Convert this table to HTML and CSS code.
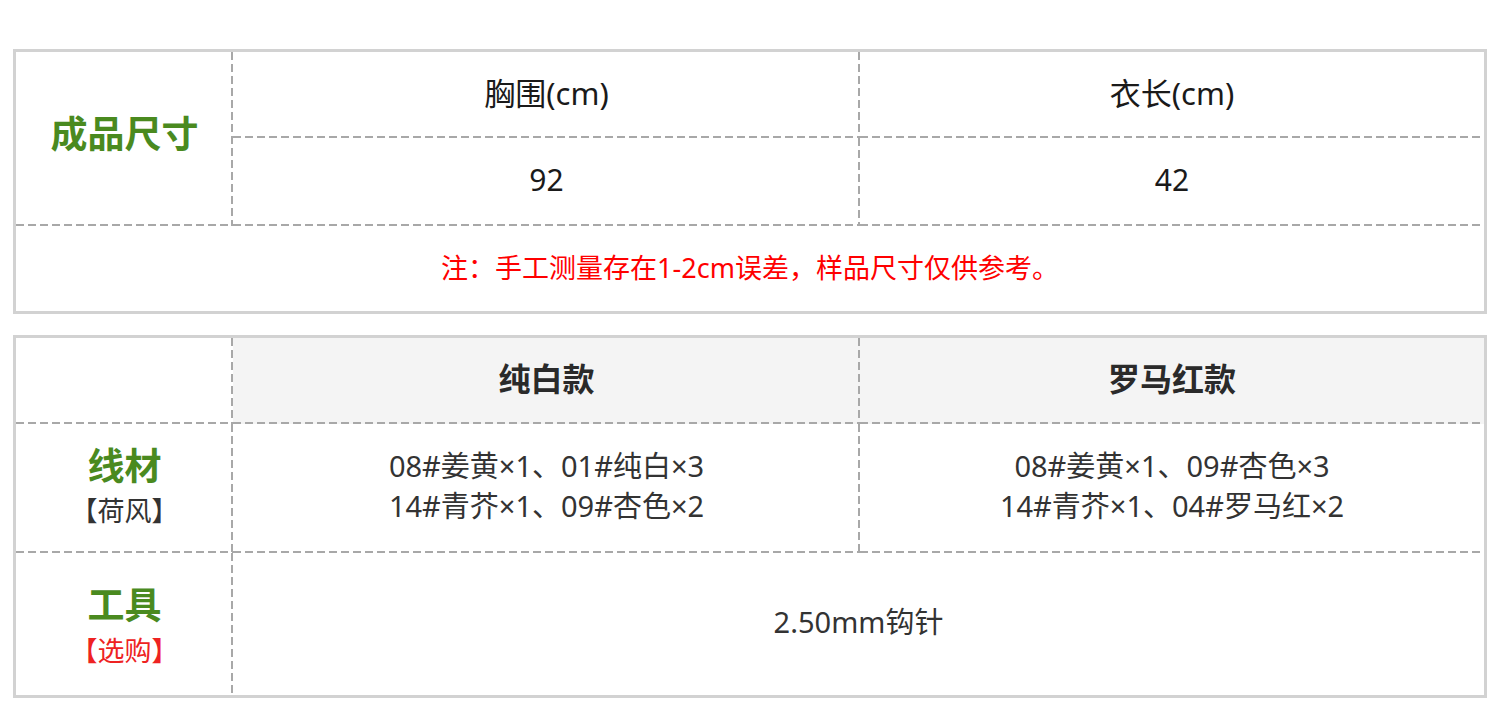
FILE: index.html
```html
<!DOCTYPE html>
<html lang="zh-CN">
<head>
<meta charset="utf-8">
<title>成品尺寸</title>
<link rel="stylesheet" href="styles.css">
</head>
<body>
<div class="page">
  <div class="table size-table">
    <div class="cell label-cell size-label rb span2"><span class="green">成品尺寸</span></div>
    <div class="cell head rb">胸围(cm)</div>
    <div class="cell head b">衣长(cm)</div>
    <div class="cell val rb">92</div>
    <div class="cell val b">42</div>
    <div class="cell note span3">注：手工测量存在1-2cm误差，样品尺寸仅供参考。</div>
  </div>

  <div class="table yarn-table">
    <div class="cell rb"></div>
    <div class="cell title rb grey">纯白款</div>
    <div class="cell title b grey">罗马红款</div>

    <div class="cell label-cell stack yarn rb">
      <span class="green">线材</span>
      <span class="sub">【荷风】</span>
    </div>
    <div class="cell body rb">
      <span>08#姜黄×1、01#纯白×3</span>
      <span>14#青芥×1、09#杏色×2</span>
    </div>
    <div class="cell body b">
      <span>08#姜黄×1、09#杏色×3</span>
      <span>14#青芥×1、04#罗马红×2</span>
    </div>

    <div class="cell label-cell stack tool r">
      <span class="green">工具</span>
      <span class="sub red">【选购】</span>
    </div>
    <div class="cell body single span2c">2.50mm钩针</div>
  </div>
</div>
</body>
</html>
```

FILE: styles.css
```css
* { box-sizing: border-box; }

html, body {
  margin: 0;
  padding: 0;
  background: #ffffff;
}

body {
  font-family: "Noto Sans", "Noto Sans CJK SC", sans-serif;
  color: #222;
}

.page {
  padding: 49px 0 0 13px;
  width: 1500px;
}

.table {
  width: 1474px;
  border: 3px solid #d2d2d2;
  display: grid;
  grid-template-columns: 217px 627px 624px;
}

.size-table {
  grid-template-rows: 86px 88px 85px;
}

.yarn-table {
  margin-top: 21px;
  grid-template-rows: 86px 129px 142px;
}

.cell {
  display: flex;
  align-items: center;
  justify-content: center;
  text-align: center;
  --dh: repeating-linear-gradient(to right, #a8a8a8 0 8px, transparent 8px 12px);
  --dv: repeating-linear-gradient(to bottom, #a8a8a8 0 8px, transparent 8px 12px);
}

.rb {
  background-image: var(--dv), var(--dh);
  background-position: right top, left bottom;
  background-size: 2px 100%, 100% 2px;
  background-repeat: no-repeat;
}

.b {
  background-image: var(--dh);
  background-position: left bottom;
  background-size: 100% 2px;
  background-repeat: no-repeat;
}

.r {
  background-image: var(--dv);
  background-position: right top;
  background-size: 2px 100%;
  background-repeat: no-repeat;
}

.grey { background-color: #f4f4f4; }

.span2 { grid-row: span 2; }
.span3 { grid-column: span 3; }
.span2c { grid-column: span 2; }

.green {
  color: #4a8a1f;
  font-weight: 700;
  font-size: 37px;
  line-height: 46px;
}

.size-label { padding-bottom: 10px; }

.stack {
  flex-direction: column;
}

.stack .green { line-height: 45px; }

.sub {
  font-size: 27px;
  line-height: 45px;
  color: #333;
}

.yarn { padding-bottom: 2px; }

.tool { padding-top: 7px; }
.tool .green { line-height: 46px; }
.tool .sub { line-height: 46px; }

.red { color: #ee2222; }

.head {
  font-size: 31px;
  color: #1a1a1a;
  padding-bottom: 8px;
}

.val {
  font-size: 30px;
  color: #1a1a1a;
  padding-bottom: 6px;
}

.note {
  font-size: 27px;
  color: #ff0000;
  padding-bottom: 4px;
}

.title {
  font-size: 32px;
  font-weight: 700;
  color: #2a2a2a;
  padding-bottom: 8px;
}

.body {
  flex-direction: column;
  font-size: 29px;
  line-height: 40px;
  color: #333;
  padding-bottom: 6px;
}

.single { padding-bottom: 4px; }
```
